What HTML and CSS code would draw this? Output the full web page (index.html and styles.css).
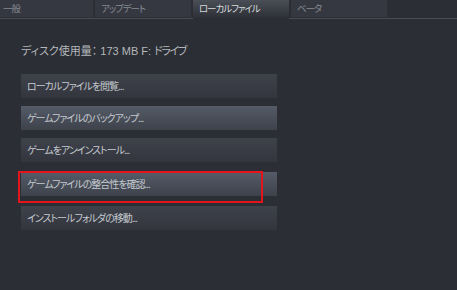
FILE: index.html
```html
<!DOCTYPE html>
<html>
  <head>
    <title>プロパティ - ローカルファイル</title>
    <meta charset="utf-8">
    <link rel="stylesheet" href="styles.css">
  </head>
<body>
  <div class="tabs">
    <div class="tab">一般</div>
    <div class="tab">アップデート</div>
    <div class="tab active">ローカルファイル</div>
    <div class="tab">ベータ</div>
  </div>
  <div class="page">
    <div class="disk"><span class="jp">ディスク使用量：</span> 173 MB F: <span class="jp drive">ドライブ</span></div>
    <div class="btn">ローカルファイルを閲覧...</div>
    <div class="btn hover">ゲームファイルのバックアップ...</div>
    <div class="btn wide">ゲームをアンインストール...</div>
    <div class="btn hover wide">ゲームファイルの整合性を確認...<span class="mark"></span></div>
    <div class="btn">インストールフォルダの移動...</div>
  </div>
</body>
</html>
```

FILE: styles.css
```css
* { margin: 0; padding: 0; box-sizing: border-box; }
body { background: #2b2e34; font-family: "Noto Sans CJK JP", "Liberation Sans", sans-serif; font-size: 10px; font-feature-settings: "palt"; height: 290px; overflow: hidden; }

.tabs { display: flex; gap: 2px; margin-left: -3px; height: 19px; border-bottom: 1px solid #474b52; align-items: flex-start; }
.tab { width: 96px; height: 17px; background: #353840; color: #858a91; padding-left: 6px; line-height: 17px; font-size: 9.5px; letter-spacing: -1.1px; }
.tab.active { height: 19px; background: linear-gradient(#4a4e56, #2b2e34); color: #d6dade; position: relative; z-index: 1; }

.page { padding: 24px 0 0 21px; }
.disk { color: #b4b7bb; font-family: "Liberation Sans", sans-serif; font-size: 11px; line-height: 14px; height: 31px; }
.disk .jp { font-family: "Noto Sans CJK JP", sans-serif; }
.disk .drive { letter-spacing: -1.5px; }

.btn { position: relative; width: 256px; height: 24px; line-height: 24px; padding-left: 6px; margin-bottom: 8px; color: #c4c9cf; background: linear-gradient(#3e424b, #33363d); letter-spacing: -1px; }
.btn.hover { background: linear-gradient(#555b67, #3d424b); }
.btn.wide { margin-bottom: 10px; }

.mark { position: absolute; left: -3px; top: -1px; width: 245px; height: 32px; border: 2px solid #e4141c; }
```
